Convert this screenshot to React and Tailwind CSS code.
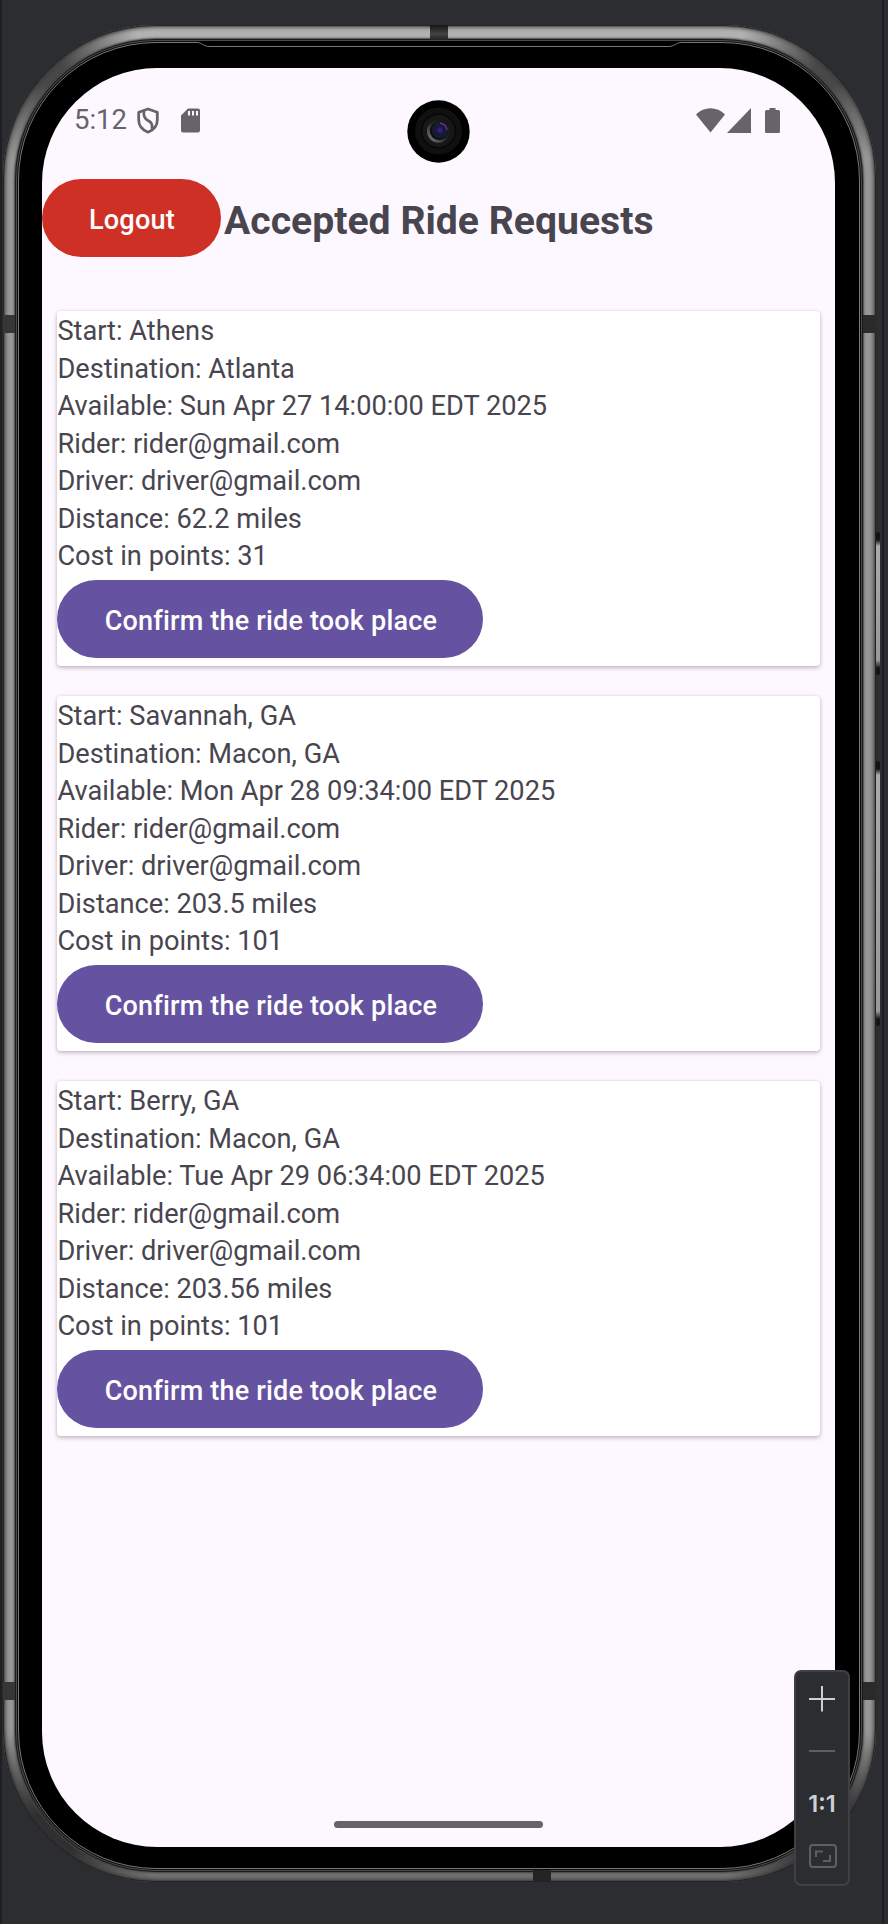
import React from "react";

const rides = [
  { start: "Athens", destination: "Atlanta", available: "Sun Apr 27 14:00:00 EDT 2025", distance: "62.2", cost: "31" },
  { start: "Savannah, GA", destination: "Macon, GA", available: "Mon Apr 28 09:34:00 EDT 2025", distance: "203.5", cost: "101" },
  { start: "Berry, GA", destination: "Macon, GA", available: "Tue Apr 29 06:34:00 EDT 2025", distance: "203.56", cost: "101" },
];

function StatusBar() {
  return (
    <div className="relative flex h-[111px] items-start justify-between pl-[32px] pr-[55px] pt-[36px] text-[#67636a]">
      <div className="flex items-center">
        <span className="h-[32px] w-[63px] text-[27.5px] leading-[32px]">5:12</span>
        <svg className="h-[27px] w-[22px]" viewBox="0 0 22 27" fill="none" stroke="currentColor" strokeWidth="2.8">
          <path d="M11 2 L20.3 5.2 V13 C20.3 19 16.5 23 11 25.2 C5.500 23 1.700 19 1.700 13 V5.200 Z" strokeLinejoin="round" />
          <path d="M7 4 C6 10 8 12 11 13.500 C15 15.500 16 18 14.800 22" />
        </svg>
        <svg className="ml-[22px] h-[25px] w-[19px]" viewBox="0 0 19 25">
          <path fill="currentColor" fillRule="evenodd" d="M7 .5H17a2 2 0 0 1 2 2V22.500a2 2 0 0 1-2 2H2a2 2 0 0 1-2-2V7.500ZM7 3V7.500H9V3ZM11 3V7.500H13V3ZM15 3V7.500H17V3Z" />
        </svg>
      </div>
      <div className="flex items-center pt-[4px]">
        <svg className="h-[25px] w-[29px]" viewBox="0 0 29 25">
          <path fill="currentColor" d="M0 6.500C8-1.700 21-1.700 29 6.500L14.500 24.500Z" />
        </svg>
        <svg className="ml-[2px] h-[25px] w-[24px]" viewBox="0 0 24 25">
          <path fill="currentColor" d="M24 0V25H0Z" />
        </svg>
        <svg className="ml-[14px] h-[25px] w-[15px]" viewBox="0 0 15 25">
          <path fill="currentColor" d="M4.500 0H10.500V2H13.500A1.500 1.500 0 0 1 15 3.500V23.500A1.500 1.500 0 0 1 13.500 25H1.500A1.500 1.500 0 0 1 0 23.500V3.500A1.500 1.500 0 0 1 1.500 2H4.500Z" />
        </svg>
      </div>
      <svg className="absolute left-[365px] top-[32px] size-[63px]" viewBox="0 0 63 63">
        <defs>
          <linearGradient id="rim" x1="0" y1="1" x2="1" y2="0">
            <stop offset="0" stopColor="#888" /><stop offset=".5" stopColor="#242424" /><stop offset="1" stopColor="#111" />
          </linearGradient>
          <radialGradient id="lens" cx=".55" cy=".45">
            <stop offset="0" stopColor="#3a2a91" /><stop offset=".45" stopColor="#19143e" /><stop offset=".8" stopColor="#17202c" /><stop offset="1" stopColor="#080810" />
          </radialGradient>
        </defs>
        <circle cx="31.500" cy="31.500" r="31.200" fill="#000" />
        <circle cx="31.500" cy="31" r="23.500" fill="#101010" />
        <circle cx="31.500" cy="31" r="17.500" fill="#050505" />
        <circle cx="31.500" cy="31" r="16.300" fill="#171717" />
        <circle cx="31.500" cy="31" r="11.500" fill="url(#rim)" />
        <circle cx="32" cy="31" r="9" fill="url(#lens)" />
        <path d="M33 23a8.500 8.500 0 0 1 7 7" stroke="#67308a" strokeWidth="1.500" fill="none" />
      </svg>
    </div>
  );
}

function RideCard({ ride }) {
  return (
    <div className="h-[355px] w-[763px] rounded-[4px] bg-white pt-[2px] shadow-[0_2px_4px_rgba(60,40,70,0.28),0_0_3px_rgba(60,40,70,0.12)]">
      <div className="flex flex-col text-[27.2px] leading-[37.5px] text-[#49454f]">
        <span>Start: {ride.start}</span>
        <span>Destination: {ride.destination}</span>
        <span>Available: {ride.available}</span>
        <span>Rider: rider@gmail.com</span>
        <span>Driver: driver@gmail.com</span>
        <span>Distance: {ride.distance} miles</span>
        <span>Cost in points: {ride.cost}</span>
      </div>
      <button className="mt-[4.5px] flex h-[78px] w-[426px] items-center justify-center rounded-full bg-[#6552a0] pl-px pt-[4px] text-[27px] font-medium tracking-[0.007em] text-white">
        Confirm the ride took place
      </button>
    </div>
  );
}

function ZoomControls() {
  return (
    <div className="absolute left-[792px] top-[1670px] flex h-[216px] w-[56px] flex-col items-center rounded-[7px] border-2 border-[#3f4042] bg-[#2b2d30] text-[#ced0d6]">
      <svg className="mt-[13px] h-[27px] w-[26px]" viewBox="0 0 26 27" stroke="currentColor" strokeWidth="2">
        <path d="M13 1V26.500M0 14H26" />
      </svg>
      <div className="mt-[38px] h-[2px] w-[26px] bg-[#5e5f61]" />
      <div className="mt-[39px] flex h-[26px] items-center font-['Inter',sans-serif] text-[23.5px] font-semibold">1:1</div>
      <svg className="ml-px mt-[27px] h-[24px] w-[28px]" viewBox="0 0 28 24" fill="none" stroke="#5e5f61" strokeWidth="2">
        <rect x="1" y="1" width="26" height="22" rx="3" />
        <path d="M7 13V7.500H14M14 17H21V11" />
      </svg>
    </div>
  );
}

function FrameDetails() {
  return (
    <>
      <div className="absolute left-[427px] top-0 h-[15px] w-[18px] bg-[linear-gradient(180deg,#151515,#444_60%,#222)]" />
      <div className="absolute left-[530px] top-[1845px] h-[12px] w-[18px] bg-[#242424]" />
      <div className="absolute left-0 top-[290px] h-[18px] w-[12px] bg-[#363636]" />
      <div className="absolute left-0 top-[1657px] h-[18px] w-[12px] bg-[#363636]" />
      <div className="absolute left-[860px] top-[290px] h-[18px] w-[13px] bg-[#2a2a2a]" />
      <div className="absolute left-[860px] top-[1657px] h-[18px] w-[13px] bg-[#2a2a2a]" />
      <svg className="absolute left-[190px] top-[16px] h-[8px] w-[492px]" viewBox="0 0 492 8" fill="none">
        <path d="M4 0H488V8H4Z" fill="#000" />
        <path d="M0 1.500H4C9 1.500 10 5.500 17 5.500H475C482 5.500 483 1.500 488 1.500H492" stroke="#777" />
      </svg>
    </>
  );
}

export default function App() {
  return (
    <div className="relative h-[1924px] w-[888px] overflow-hidden border-l-2 border-[#1e1f22] bg-[#2b2d30] pl-px pt-[25px] font-['Roboto',sans-serif]">
      <div className="absolute left-[880px] top-0 h-full w-[2px] bg-[#1e1f22]" />
      <div className="absolute left-[874px] top-[532px] h-[143px] w-[4px] rounded-full bg-[linear-gradient(180deg,#111_0,#151515_8px,#aaa_14px,#999_128px,#151515_136px,#111_100%)]" />
      <div className="absolute left-[874px] top-[761px] h-[265px] w-[4px] rounded-full bg-[linear-gradient(180deg,#111_0,#151515_8px,#aaa_14px,#999_250px,#151515_258px,#111_100%)]" />
      <div className="relative h-[1857px] w-[873px] rounded-[152px] bg-[radial-gradient(circle_at_45px_45px,#484848_15px,transparent_95px),radial-gradient(circle_at_828px_45px,#484848_15px,transparent_95px),radial-gradient(circle_at_45px_1812px,#303030_25px,transparent_110px),radial-gradient(circle_at_828px_1812px,#303030_25px,transparent_110px),linear-gradient(180deg,#b4b4b4_0,#979797_100px,#979797_1700px,#707070_100%)] pb-[13px] pl-[15px] pr-[16px] pt-[17px] shadow-[inset_0_0_1px_1px_#202020,inset_0_0_4px_2px_#333]">
        <div className="h-full w-full rounded-[138px] border border-[#777] bg-black pl-[23px] pt-[25px] shadow-[0_0_0_1px_#0c0c0c,0_0_0_2px_#4a4a4a,0_0_0_3px_#1a1a1a,0_0_2px_4px_#444]">
          <div className="relative h-[1779px] w-[793px] overflow-hidden rounded-[115px] bg-[#fdf8ff]">
            <StatusBar />
            <div className="flex items-center">
              <button className="flex h-[78px] w-[179px] items-center justify-center rounded-full bg-[#cf3026] pl-px pt-[5px] text-[27.15px] font-medium tracking-[0.007em] text-white">
                Logout
              </button>
              <h1 className="ml-[3px] pt-[8px] text-[39.15px] font-bold leading-none text-[#49454f]">Accepted Ride Requests</h1>
            </div>
            <div className="flex flex-col gap-[30px] pl-[15.4px] pt-[54px]">
              {rides.map((ride) => (
                <RideCard key={ride.start} ride={ride} />
              ))}
            </div>
            <div className="absolute left-[292px] top-[1753px] h-[7px] w-[209px] rounded-full bg-[#67636a]" />
          </div>
        </div>
        <FrameDetails />
      </div>
      <ZoomControls />
    </div>
  );
}
